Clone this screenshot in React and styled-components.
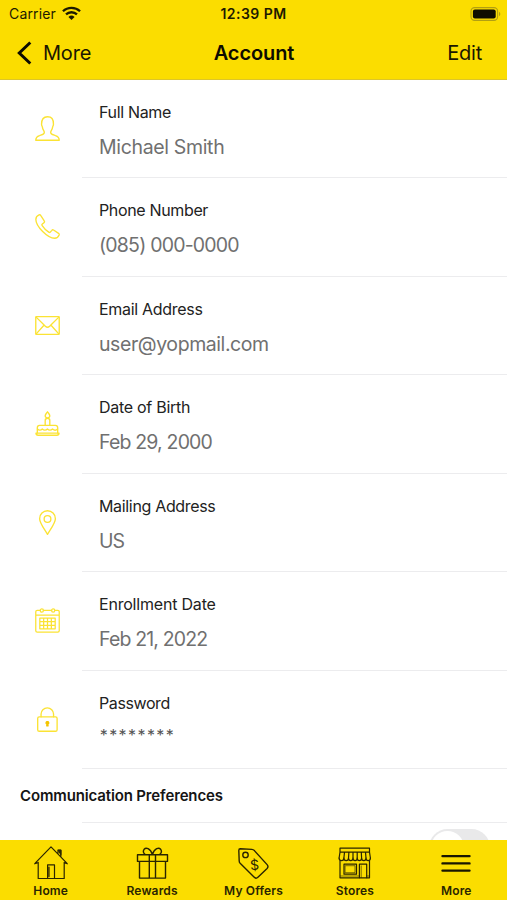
import styled, { createGlobalStyle } from 'styled-components';

const GlobalStyle = createGlobalStyle`
  * {
    box-sizing: border-box;
  }

  body {
    margin: 0;
    background: #ffffff;
    font-family: Inter, 'Liberation Sans', sans-serif;
  }

  p,
  h1,
  h2 {
    margin: 0;
    white-space: nowrap;
  }

  svg {
    display: block;
    flex-shrink: 0;
  }
`;

const Screen = styled.div`
  display: flex;
  flex-direction: column;
  width: 507px;
  height: 900px;
  overflow: hidden;
  background: #ffffff;
`;

const Header = styled.header`
  height: 80px;
  flex-shrink: 0;
  background: #fbdd00;
  border-bottom: 1px solid #dcc52a;
`;

const StatusBar = styled.div`
  display: grid;
  grid-template-columns: 1fr auto 1fr;
  align-items: center;
  height: 27px;
  padding: 0 6px;
  color: #1d1a00;
`;

const Carrier = styled.div`
  display: flex;
  align-items: center;
  gap: 6px;
  padding-left: 3px;
  font-size: 14px;
  letter-spacing: 0.15px;
`;

const Time = styled.p`
  font-size: 14px;
  font-weight: 600;
  letter-spacing: 0.45px;
`;

const Battery = styled.div`
  justify-self: end;
`;

const NavBar = styled.nav`
  display: grid;
  grid-template-columns: 1fr auto 1fr;
  align-items: center;
  height: 51px;
  padding: 0 25px 0 16px;
`;

const NavButton = styled.button`
  display: flex;
  align-items: center;
  gap: 11px;
  padding: 0;
  border: none;
  background: none;
  justify-self: ${(props) => props.$side};
  font-family: inherit;
  font-size: 20px;
  line-height: 24px;
  letter-spacing: -0.2px;
  color: #1a1700;
`;

const Title = styled.h1`
  padding-left: 10px;
  font-size: 20px;
  font-weight: 600;
  line-height: 24px;
  letter-spacing: -0.1px;
  color: #0d0c00;
`;

const Content = styled.main`
  flex: 1;
  min-height: 0;
  margin-top: -0.5px;
  overflow: hidden;
`;

const Row = styled.section`
  display: flex;
  height: 98.5px;
`;

const RowIcon = styled.div`
  display: flex;
  justify-content: center;
  width: 82px;
  padding: 36px 0 0 12.5px;
  color: #fbe334;
`;

const RowBody = styled.div`
  flex: 1;
  padding: 22px 0 0 17px;
  border-bottom: 1px solid #ececee;
`;

const Label = styled.p`
  font-size: 16px;
  line-height: 20px;
  letter-spacing: ${(props) => props.$spacing};
  color: #222222;
`;

const Value = styled.p`
  margin-top: 13px;
  font-size: 19.5px;
  line-height: 24px;
  letter-spacing: ${(props) => props.$spacing};
  color: #707070;
`;

const MaskedValue = styled.div`
  display: flex;
  margin-top: 14.5px;
`;

const MaskChar = styled.span`
  width: 9.45px;
  font-size: 16px;
  line-height: 16px;
  text-align: center;
  color: #555555;
`;

const SectionTitle = styled.h2`
  height: 53px;
  padding-left: 20px;
  font-size: 15px;
  font-weight: 600;
  line-height: 54px;
  letter-spacing: -0.14px;
  color: #151515;
`;

const PreferenceRow = styled.section`
  display: flex;
  justify-content: flex-end;
  height: 80px;
  margin-left: 82px;
  padding: 6px 17px 0 0;
  border-top: 1px solid #ececee;
`;

const Switch = styled.div`
  width: 61px;
  height: 37px;
  padding: 2px;
  border-radius: 19px;
  background: #e9e9ea;
`;

const Knob = styled.div`
  width: 33px;
  height: 33px;
  border-radius: 50%;
  background: #ffffff;
`;

const TabBar = styled.footer`
  display: grid;
  grid-template-columns: repeat(5, 1fr);
  height: 60px;
  flex-shrink: 0;
  background: #fbdd00;
`;

const Tab = styled.div`
  display: flex;
  flex-direction: column;
  align-items: center;
  padding-top: 5px;
  color: #2a2500;
`;

const TabLabel = styled.p`
  margin-top: 2px;
  font-size: 12px;
  font-weight: 600;
  line-height: 16px;
  letter-spacing: 0.15px;
`;

const Icon = ({ size = 26, box = size, stroke = 1.4, children }) => (
  <svg
    width={size}
    height={size}
    viewBox={`0 0 ${box} ${box}`}
    fill="none"
    stroke="currentColor"
    strokeWidth={stroke}
    strokeLinecap="round"
    strokeLinejoin="round"
  >
    {children}
  </svg>
);

const WifiIcon = () => (
  <svg width="19" height="15" viewBox="0 0 18 14" fill="none" stroke="#1d1a00" strokeWidth="2.2">
    <path d="M.9 4.900a11.700 11.700 0 0 1 16.200 0" />
    <path d="M3.800 7.900a7.500 7.500 0 0 1 10.400 0" />
    <path d="M9 13.200 6.100 10.200a4.200 4.200 0 0 1 5.800 0Z" fill="#1d1a00" stroke="none" />
  </svg>
);

const BatteryIcon = () => (
  <svg width="31" height="14" viewBox="0 0 31 14">
    <rect x="1" y=".6" width="26.6" height="12.8" rx="3.6" fill="none" stroke="#b29f12" strokeWidth="1.1" />
    <rect x="2.9" y="2.5" width="22.8" height="9" rx="2" fill="#0f0d00" />
    <path d="M29 4.800c1.800.7 1.800 3.700 0 4.400Z" fill="#b29f12" />
  </svg>
);

const BackIcon = () => (
  <svg width="16" height="24" viewBox="0 0 16 24" fill="none" stroke="#0d0c00" strokeWidth="3">
    <path d="M14.300 1.500 3.300 12l11 10.500" />
  </svg>
);

const PersonIcon = () => (
  <Icon size={25} box={26}>
    <path d="M.8 25.200h24.400c0-2.500-1.300-4.100-3.900-4.900-2.700-.9-5-1.200-5-3.200 0-1.700 1.700-2.600 2-5.500.2-1.200.9-1.700.9-3C19.200 3 17.400.8 13 .8S6.800 3 6.800 8.600c0 1.300.7 1.800.9 3 .3 2.900 2 3.800 2 5.500 0 2-2.300 2.300-5 3.200C2.100 21.100.8 22.700.8 25.200Z" />
  </Icon>
);

const PhoneIcon = () => (
  <Icon size={25} box={26}>
    <path d="M4.200.9C2.600 1.600.9 3.600.9 5.600c0 3.700 3.700 9.100 7.100 12.500s8.600 7 12.400 7.100c2.100 0 4.100-1.800 4.700-3.400.2-.7 0-1.200-.6-1.600l-5.200-3.500c-.7-.5-1.300-.3-1.800.3l-1.600 1.800c-.4.500-1 .5-1.600.1-2.800-1.800-5-4-6.800-6.800-.4-.6-.4-1.200.1-1.600L9.300 9c.6-.5.800-1.100.3-1.800L5.900 1.500C5.500.8 4.900.6 4.200.9Z" />
  </Icon>
);

const EmailIcon = () => (
  <Icon size={25} box={26}>
    <rect x=".8" y="3.700" width="24.4" height="18.6" rx=".8" />
    <path d="m1.200 4.300 9.600 9.500c1.400 1.300 3 1.300 4.400 0l9.600-9.500M1.300 21.700l8-8.900M24.700 21.700l-8-8.900" />
  </Icon>
);

const CakeIcon = () => (
  <Icon size={25} box={26}>
    <path d="M13 .8c1.200 1.700 2.400 2.700 2.400 4.100A2.400 2.400 0 0 1 13 7.300a2.400 2.400 0 0 1-2.400-2.400c0-1.400 1.200-2.400 2.400-4.100ZM10.600 15V9.800c0-1.400.9-2.300 2.400-2.300s2.400.9 2.400 2.300V15M2.400 23v-5.600c0-1.500.9-2.400 2.400-2.400h16.400c1.500 0 2.400.9 2.400 2.400V23" />
    <path d="M2.600 18.800c1.600 1.600 3.400 1.500 5-.1 1.600 1.600 3.700 1.600 5.300 0 1.600 1.600 3.700 1.600 5.300 0 1.700 1.500 3.600 1.700 5.200.1M1 23h24c-.1 1.500-.9 2.200-2.200 2.200H3.200C1.900 25.200 1.100 24.500 1 23Z" />
  </Icon>
);

const PinIcon = () => (
  <Icon size={25} box={26}>
    <path d="M13 25.300C9.900 19.800 4.800 13.600 4.800 9a8.200 8.200 0 0 1 16.400 0c0 4.600-5.100 10.800-8.200 16.300Z" />
    <circle cx="13" cy="9.300" r="3.500" />
  </Icon>
);

const CalendarIcon = () => (
  <Icon size={25} box={26} stroke={1.3}>
    <path d="M5.500 2.500H2.300C1.300 2.500.8 3 .8 4v19.700c0 1 .5 1.500 1.500 1.500h21.400c1 0 1.500-.5 1.500-1.500V4c0-1-.5-1.500-1.500-1.500h-3.200M8.700 2.500h8.600M.8 7.300h24.400" />
    <circle cx="7.100" cy="2.700" r="1.700" />
    <circle cx="18.900" cy="2.700" r="1.700" />
    <path d="M5 10.500h16v11.200H5ZM5 14.200h16M5 18h16M9 10.500v11.200M13 10.500v11.200M17 10.500v11.200" />
  </Icon>
);

const LockIcon = () => (
  <Icon size={25} box={26}>
    <rect x="2.8" y="10.3" width="20.2" height="14.900" rx="1.600" />
    <path d="M6.300 10.200V7.400a6.500 6.500 0 0 1 13 0v2.800" />
    <path d="M12.900 15.200a1.300 1.300 0 0 1 .6 2.500v2h-1.200v-2a1.300 1.300 0 0 1 .6-2.500Z" fill="#f4c500" stroke="#f4c500" />
  </Icon>
);

const HomeIcon = () => (
  <Icon size={36} stroke={1.2}>
    <path d="M5.200 17.300v16.200h26V17.300M2.200 18.200 18 1.900l15.800 16.300M1.700 18.800l3.500-1.200M34.300 18.800l-3.100-1.200M14.600 33.300V19.800h6.900v13.500M16 22v9.600M25 8.300V5.200h2.900v6" />
    <path d="M25.300 5.300h2.500v4.200Z" fill="currentColor" />
  </Icon>
);

const GiftIcon = () => (
  <Icon size={36} stroke={1.4}>
    <path d="M3.500 9.800h30v6.600h-30ZM5.500 16.400h26v16.700h-26ZM15.300 9.800v23.300M21.500 9.800v23.300M18.400 9.400C16.200 3.200 11.900 2.100 10.200 4.200c-1.300 1.700-.8 3.900 1 5.400M18.400 9.400c2.200-6.200 6.500-7.300 8.200-5.200 1.300 1.700.8 3.900-1 5.400" />
  </Icon>
);

const TagText = styled.text`
  font-family: Inter, sans-serif;
  font-size: 14px;
  font-weight: 400;
  fill: currentColor;
  stroke: none;
`;

const TagIcon = () => (
  <Icon size={36} stroke={1.4}>
    <path d="m5.300 3.700 11.600.7c1.100.1 1.800.5 2.500 1.200l12.700 14c1.200 1.400 1.200 2.600 0 3.900l-9.200 8.800c-1.300 1.200-2.600 1.100-3.900-.2L5.400 18.600c-.8-.8-1.200-1.600-1.200-2.700l-.4-10.500C3.800 4.300 4.300 3.700 5.300 3.700Z" />
    <circle cx="10.500" cy="9.900" r="2.700" />
    <TagText x="15" y="24.900" transform="rotate(-5 19 20)">
      $
    </TagText>
  </Icon>
);

const StoreIcon = () => (
  <Icon size={36} stroke={1.2}>
    <path d="M3 3.200h29.500v4H3ZM3 7.200 2.100 13M32.500 7.200l.9 5.800M3 15.800v17h29.500v-17M7.500 7.200 6.900 13M11.900 7.200l-.4 5.800M16 7.200V13M20.200 7.200V13M24.300 7.200l.3 5.800M28.500 7.200l.5 5.800" />
    <path d="M2.100 13c0 3.500 4.800 3.500 4.800 0 0 3.500 4.600 3.500 4.600 0 0 3.500 4.500 3.500 4.500 0 0 3.500 4.200 3.500 4.200 0 0 3.500 4.400 3.500 4.400 0 0 3.500 4.400 3.500 4.400 0 0 3.500 4.400 3.500 4.400 0M7 19.200h12.500v10H7ZM22.400 32.700V19.200h7.300v13.500" />
    <path d="M8.500 20.700H18v7H8.500ZM24.200 20.800v11.700M3.500 31h18.500M30 31h2.500" strokeWidth=".6" />
  </Icon>
);

const MenuIcon = () => (
  <Icon size={36} stroke={2.4}>
    <path d="M4.500 11.100h27M4.500 18.400h27M4.500 25.600h27" stroke="#191600" />
  </Icon>
);

const fields = [
  { label: 'Full Name', value: 'Michael Smith', icon: PersonIcon, labelSpacing: '-0.33px', valueSpacing: '-0.34px' },
  { label: 'Phone Number', value: '(085) 000-0000', icon: PhoneIcon, labelSpacing: '-0.35px', valueSpacing: '-0.8px' },
  { label: 'Email Address', value: 'user@yopmail.com', icon: EmailIcon, labelSpacing: '-0.3px', valueSpacing: '-0.43px' },
  { label: 'Date of Birth', value: 'Feb 29, 2000', icon: CakeIcon, labelSpacing: '-0.28px', valueSpacing: '-0.82px' },
  { label: 'Mailing Address', value: 'US', icon: PinIcon, labelSpacing: '-0.33px', valueSpacing: '-1px' },
  { label: 'Enrollment Date', value: 'Feb 21, 2022', icon: CalendarIcon, labelSpacing: '-0.2px', valueSpacing: '-0.85px' },
  { label: 'Password', value: '********', icon: LockIcon, labelSpacing: '-0.4px', masked: true },
];

const tabs = [
  { label: 'Home', icon: HomeIcon },
  { label: 'Rewards', icon: GiftIcon },
  { label: 'My Offers', icon: TagIcon },
  { label: 'Stores', icon: StoreIcon },
  { label: 'More', icon: MenuIcon },
];

const App = () => {
  return (
    <>
      <GlobalStyle />
      <Screen>
        <Header>
          <StatusBar>
            <Carrier>
              Carrier
              <WifiIcon />
            </Carrier>
            <Time>12:39 PM</Time>
            <Battery>
              <BatteryIcon />
            </Battery>
          </StatusBar>
          <NavBar>
            <NavButton $side="start">
              <BackIcon />
              More
            </NavButton>
            <Title>Account</Title>
            <NavButton $side="end">Edit</NavButton>
          </NavBar>
        </Header>
        <Content>
          {fields.map(({ label, value, icon: FieldIcon, labelSpacing, valueSpacing, masked }) => (
            <Row key={label}>
              <RowIcon>
                <FieldIcon />
              </RowIcon>
              <RowBody>
                <Label $spacing={labelSpacing}>{label}</Label>
                {masked ? (
                  <MaskedValue>
                    {value.split('').map((char, index) => (
                      <MaskChar key={index}>{char}</MaskChar>
                    ))}
                  </MaskedValue>
                ) : (
                  <Value $spacing={valueSpacing}>{value}</Value>
                )}
              </RowBody>
            </Row>
          ))}
          <SectionTitle>Communication Preferences</SectionTitle>
          <PreferenceRow>
            <Switch>
              <Knob />
            </Switch>
          </PreferenceRow>
        </Content>
        <TabBar>
          {tabs.map(({ label, icon: TabIcon }) => (
            <Tab key={label}>
              <TabIcon />
              <TabLabel>{label}</TabLabel>
            </Tab>
          ))}
        </TabBar>
      </Screen>
    </>
  );
};

export default App;
